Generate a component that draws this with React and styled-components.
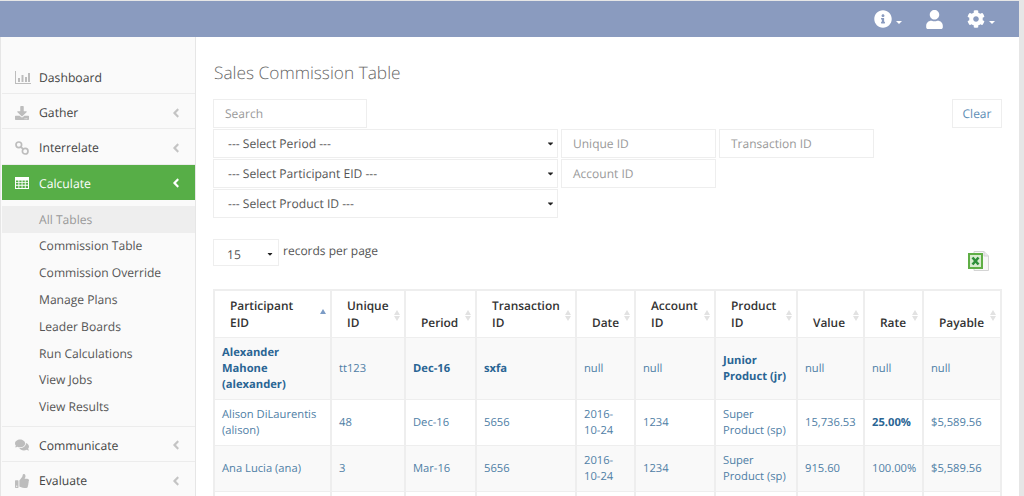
import React from 'react';
import styled, { createGlobalStyle } from 'styled-components';
import { FaInfoCircle, FaUser, FaCog, FaDownload, FaComments, FaThumbsUp, FaAngleLeft, FaCaretDown } from 'react-icons/fa';

const GlobalStyle = createGlobalStyle`
  html, body { margin: 0; padding: 0; height: 496px; overflow: hidden; background: #e6e6e6; }
  body { font-family: "Open Sans", "Liberation Sans", sans-serif; font-size: 12px; color: #333; text-rendering: geometricPrecision; }
  * { box-sizing: border-box; }
`;

const ChartIcon = () => (
  <svg width="16" height="13" viewBox="0 0 16 13" fill="currentColor">
    <path d="M0 0h1v12h15v1H0z" />
    <path d="M3 7h2v4H3zM6.500 4h2v7h-2zM10 6h2v5h-2zM13 2h2v9h-2z" />
  </svg>
);

const LinkIcon = () => (
  <svg width="14" height="14" viewBox="0 0 14 14" fill="none" stroke="currentColor" strokeWidth="1.700">
    <circle cx="3.800" cy="3.800" r="2.800" />
    <circle cx="10.200" cy="10.200" r="2.800" />
    <path d="M5.600 5.600l2.800 2.800" />
  </svg>
);

const GridIcon = () => (
  <svg width="14" height="12" viewBox="0 0 14 12">
    <path d="M0 0h14v12H0z" fill="currentColor" />
    <path d="M1 3.500h2.400v1.700H1zM4.300 3.500h2.300v1.700H4.300zM7.500 3.500h2.300v1.700H7.500zM10.700 3.500H13v1.700h-2.300zM1 6.100h2.400v1.700H1zM4.300 6.100h2.300v1.700H4.300zM7.500 6.100h2.300v1.700H7.500zM10.700 6.100H13v1.700h-2.300zM1 8.700h2.400V11H1zM4.300 8.700h2.300V11H4.300zM7.500 8.700h2.300V11H7.500zM10.700 8.700H13V11h-2.300z" fill="#57ae47" />
  </svg>
);

const mainMenu = [
  { label: 'Dashboard', icon: ChartIcon },
  { label: 'Gather', icon: FaDownload, arrow: true },
  { label: 'Interrelate', icon: LinkIcon, arrow: true },
  { label: 'Calculate', icon: GridIcon, arrow: true, active: true },
];
const subMenu = ['All Tables', 'Commission Table', 'Commission Override', 'Manage Plans', 'Leader Boards', 'Run Calculations', 'View Jobs', 'View Results'];
const bottomMenu = [
  { label: 'Communicate', icon: FaComments, arrow: true },
  { label: 'Evaluate', icon: FaThumbsUp, arrow: true },
];

const columns = [
  { label: ['Participant', 'EID'], width: 117, sorted: true },
  { label: ['Unique', 'ID'], width: 74 },
  { label: ['Period'], width: 71 },
  { label: ['Transaction', 'ID'], width: 100 },
  { label: ['Date'], width: 59 },
  { label: ['Account', 'ID'], width: 80 },
  { label: ['Product', 'ID'], width: 82 },
  { label: ['Value'], width: 67 },
  { label: ['Rate'], width: 59 },
  { label: ['Payable'], width: 78 },
];

const rows = [
  { striped: true, cells: [['Alexander Mahone (alexander)', 'b'], ['tt123', 'n'], ['Dec-16', 'b'], ['sxfa', 'b'], ['null', 'n'], ['null', 'n'], ['Junior Product (jr)', 'b'], ['null', 'n'], ['null', 'n'], ['null', 'n']] },
  { cells: [['Alison DiLaurentis (alison)', 'n'], ['48', 'n'], ['Dec-16', 'n'], ['5656', 'n'], ['2016-10-24', 'n'], ['1234', 'n'], ['Super Product (sp)', 'n'], ['15,736.53', 'n'], ['25.00%', 'b'], ['$5,589.56', 'n']] },
  { striped: true, cells: [['Ana Lucia (ana)', 'n'], ['3', 'n'], ['Mar-16', 'n'], ['5656', 'n'], ['2016-10-24', 'n'], ['1234', 'n'], ['Super Product (sp)', 'n'], ['915.60', 'n'], ['100.00%', 'n'], ['$5,589.56', 'n']] },
  { empty: true, cells: [['', 'n'], ['', 'n'], ['', 'n'], ['', 'n'], ['', 'n'], ['', 'n'], ['', 'n'], ['', 'n'], ['', 'n'], ['', 'n']] },
];

const MenuItem = ({ item }) => {
  const Icon = item.icon;
  return (
    <MenuRow $active={item.active}>
      <MenuIcon $active={item.active}><Icon /></MenuIcon>
      <MenuLabel>{item.label}</MenuLabel>
      {item.arrow && <MenuArrow $active={item.active}><FaAngleLeft /></MenuArrow>}
    </MenuRow>
  );
};

const ExcelIcon = () => (
  <svg width="22" height="20" viewBox="0 0 22 20">
    <path d="M6 .5h10l4.500 4.500v14.500H6z" fill="#f7f7f7" stroke="#d4d4d4" />
    <path d="M16 .5V5h4.500" fill="#e8e8e8" stroke="#d4d4d4" />
    <rect x="1" y="3" width="13" height="14" fill="#d9ecd0" stroke="#5fae45" strokeWidth="2" />
    <path d="M4.500 6.500l6 7M10.500 6.500l-6 7" stroke="#2f8f3a" strokeWidth="2.600" />
  </svg>
);

const SelectField = ({ children }) => (
  <SelectBox>
    <span>{children}</span>
    <FaCaretDown size={9} color="#222" />
  </SelectBox>
);

export default function App() {
  return (
    <Page>
      <GlobalStyle />
      <TopBar>
        <TopIcon><FaInfoCircle size={18} /><Caret /></TopIcon>
        <TopIcon><FaUser size={19} /></TopIcon>
        <TopIcon><FaCog size={18} /><Caret /></TopIcon>
      </TopBar>
      <Body>
        <Sidebar>
          {mainMenu.map((item) => <MenuItem key={item.label} item={item} />)}
          <SubList>
            {subMenu.map((s, i) => <SubItem key={s} $current={i === 0}>{s}</SubItem>)}
          </SubList>
          {bottomMenu.map((item) => <MenuItem key={item.label} item={item} />)}
        </Sidebar>
        <Main>
          <Title>Sales Commission Table</Title>
          <Filters>
            <FilterTop>
              <TextField $w={154}>Search</TextField>
              <ClearButton>Clear</ClearButton>
            </FilterTop>
            <FilterRow>
              <SelectField>--- Select Period ---</SelectField>
              <TextField $w={155}>Unique ID</TextField>
              <TextField $w={155}>Transaction ID</TextField>
            </FilterRow>
            <FilterRow>
              <SelectField>--- Select Participant EID ---</SelectField>
              <TextField $w={155}>Account ID</TextField>
            </FilterRow>
            <FilterRow>
              <SelectField>--- Select Product ID ---</SelectField>
            </FilterRow>
          </Filters>
          <PerPageRow>
            <PerPage>
              <PageSelect><span>15</span><FaCaretDown size={8} color="#222" /></PageSelect>
              <PerPageText>records per page</PerPageText>
            </PerPage>
            <ExcelSlot><ExcelIcon /></ExcelSlot>
          </PerPageRow>
          <Table>
            <colgroup>
              {columns.map((c) => <Col key={c.label.join()} $w={c.width} />)}
            </colgroup>
            <thead>
              <tr>
                {columns.map((c) => (
                  <Th key={c.label.join()}>
                    {c.label.map((l) => <div key={l}>{l}</div>)}
                    {c.sorted ? <SortedMark /> : <SortMark />}
                  </Th>
                ))}
              </tr>
            </thead>
            <tbody>
              {rows.map((r, i) => (
                <Tr key={i} $striped={r.striped} $empty={r.empty}>
                  {r.cells.map(([text, kind], j) => (
                    <Td key={j} $kind={kind}>{text}</Td>
                  ))}
                </Tr>
              ))}
            </tbody>
          </Table>
        </Main>
      </Body>
    </Page>
  );
}

const Page = styled.div`
  width: 1019px;
  height: 495px;
  margin-top: 1px;
  overflow: hidden;
  background: #fff;
  display: flex;
  flex-direction: column;
`;

const TopBar = styled.header`
  height: 36px;
  flex: none;
  background: #8a9bbf;
  display: flex;
  justify-content: flex-end;
  align-items: center;
  gap: 23px;
  padding-right: 24px;
  color: #fff;
`;

const TopIcon = styled.span`
  display: flex;
  align-items: center;
  gap: 4px;
`;

const Caret = styled.i`
  width: 0;
  height: 0;
  margin-top: 6px;
  border-left: 3px solid transparent;
  border-right: 3px solid transparent;
  border-top: 3px solid #fff;
`;

const Body = styled.div`
  flex: 1;
  display: flex;
  min-height: 0;
`;

const Sidebar = styled.aside`
  width: 196px;
  flex: none;
  padding: 22px 0 0 1px;
  background: #fafafa;
  border-left: 1px solid #e6e6e6;
  border-right: 1px solid #e6e6e6;
`;

const MenuRow = styled.div`
  height: 35.2px;
  display: flex;
  align-items: center;
  padding: 3px 12px 0 13px;
  background: ${({ $active }) => ($active ? '#57ae47' : 'transparent')};
  color: ${({ $active }) => ($active ? '#fff' : '#444')};
  border-bottom: 1px solid ${({ $active }) => ($active ? '#57ae47' : '#ececec')};
`;

const MenuIcon = styled.span`
  width: 24px;
  display: flex;
  font-size: 14px;
  color: ${({ $active }) => ($active ? '#fff' : '#bdbdbd')};
`;

const MenuLabel = styled.span`
  flex: 1;
  font-size: 12.2px;
`;

const MenuArrow = styled.span`
  display: flex;
  font-size: 14px;
  color: ${({ $active }) => ($active ? '#fff' : '#c4c4c4')};
`;

const SubList = styled.div`
  padding: 6px 0;
  height: 227px;
  border-bottom: 1px solid #ececec;
`;

const SubItem = styled.div`
  height: 26.8px;
  display: flex;
  align-items: center;
  padding-left: 37px;
  font-size: 12.1px;
  color: ${({ $current }) => ($current ? '#999' : '#555')};
  background: ${({ $current }) => ($current ? '#eeeeee' : 'transparent')};
`;

const Main = styled.main`
  flex: 1;
  min-width: 0;
  padding: 0 17px;
`;

const Title = styled.h1`
  margin: 25px 0 13px 1px;
  font-size: 17.3px;
  line-height: 24px;
  font-weight: 300;
  color: #666;
`;

const Filters = styled.div`
  display: flex;
  flex-direction: column;
  gap: 1px;
`;

const FilterTop = styled.div`
  display: flex;
  justify-content: space-between;
`;

const FilterRow = styled.div`
  display: flex;
  gap: 3px;
`;

const TextField = styled.div`
  width: ${({ $w }) => $w}px;
  height: 29px;
  padding: 0 10px 0 11px;
  display: flex;
  align-items: center;
  border: 1px solid #eee;
  background: #fff;
  color: #999;
  font-size: 12px;
`;

const SelectBox = styled.div`
  width: 345px;
  height: 29px;
  padding: 0 2px 0 14px;
  display: flex;
  align-items: center;
  justify-content: space-between;
  border: 1px solid #eee;
  background: #fff;
  color: #555;
  font-size: 12.1px;
`;

const ClearButton = styled.div`
  width: 50px;
  height: 29px;
  display: flex;
  align-items: center;
  justify-content: center;
  border: 1px solid #eee;
  color: #5b8db5;
  font-size: 12px;
`;

const PerPageRow = styled.div`
  display: flex;
  justify-content: space-between;
  margin-top: 21px;
  height: 50px;
`;

const PerPage = styled.div`
  display: flex;
  gap: 4px;
`;

const PageSelect = styled.div`
  width: 66px;
  height: 27px;
  padding: 3px 4px 0 13px;
  display: flex;
  align-items: center;
  justify-content: space-between;
  border: 1px solid #eee;
  color: #555;
  font-size: 12.1px;
`;

const PerPageText = styled.span`
  color: #555;
  line-height: 24px;
`;

const ExcelSlot = styled.div`
  padding: 12px 12px 0 0;
`;

const Table = styled.table`
  table-layout: fixed;
  width: 787px;
  border-collapse: collapse;
  border: 2px solid #eee;
`;

const Col = styled.col`
  width: ${({ $w }) => $w}px;
`;

const Th = styled.th`
  position: relative;
  height: 47px;
  padding: 7px 14px 5px 15px;
  text-align: left;
  vertical-align: bottom;
  font-weight: 600;
  font-size: 11.9px;
  line-height: 17px;
  color: #333;
  border-left: 2px solid #eee;
  white-space: nowrap;
`;

const SortMark = styled.span`
  position: absolute;
  right: 3px;
  top: 19px;
  width: 7px;
  height: 11px;
  &::before, &::after {
    content: '';
    position: absolute;
    left: 0;
    border-left: 3.5px solid transparent;
    border-right: 3.5px solid transparent;
  }
  &::before { top: 0; border-bottom: 5px solid #e2e2e2; }
  &::after { bottom: 0; border-top: 5px solid #e2e2e2; }
`;

const SortedMark = styled.span`
  position: absolute;
  right: 4px;
  top: 18px;
  border-left: 3.5px solid transparent;
  border-right: 3.5px solid transparent;
  border-bottom: 5px solid #7c9cc6;
`;

const Tr = styled.tr`
  background: ${({ $striped }) => ($striped ? '#f9f9f9' : '#fff')};
  height: ${({ $empty }) => ($empty ? '46px' : 'auto')};
`;

const Td = styled.td`
  padding: 6.5px 7px;
  font-size: 11.2px;
  line-height: 16px;
  color: ${({ $kind }) => ($kind === 'b' ? '#2a6594' : '#4f80a6')};
  font-weight: ${({ $kind }) => ($kind === 'b' ? 700 : 400)};
  border: 1px solid #eee;
  border-left-width: 2px;
`;
